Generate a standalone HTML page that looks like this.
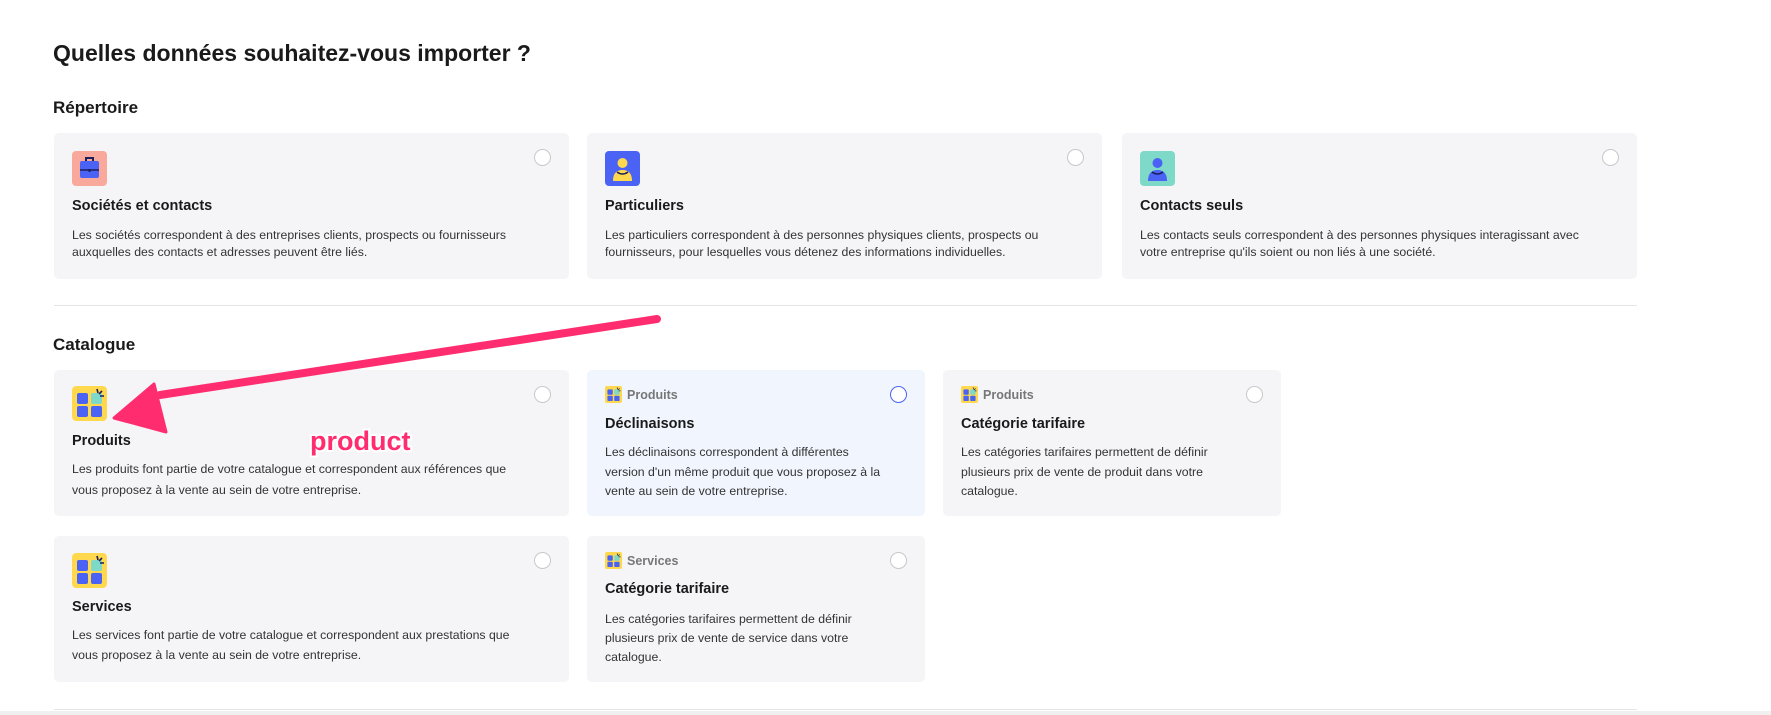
<!DOCTYPE html>
<html><head><meta charset="utf-8"><style>
*{margin:0;padding:0;box-sizing:border-box}
body{width:1771px;height:715px;background:#fff;font-family:"Liberation Sans",sans-serif;color:#1a1a1a;position:relative;overflow:hidden}
.a{position:absolute}
h1{position:absolute;left:53px;top:40px;font-size:23px;font-weight:bold;white-space:nowrap}
h2{position:absolute;font-size:17px;font-weight:bold;left:53px}
.card{position:absolute;background:#f5f5f8;border-radius:5px}
.card .ic{position:absolute;left:18px;top:18px;width:35px;height:35px;border-radius:4px}
.card .rd{position:absolute;top:16px;right:18px;width:17px;height:17px;border-radius:50%;border:1.5px solid #c8c8cc;background:#fff}
.card .t{position:absolute;left:18px;font-size:14.5px;font-weight:bold;white-space:nowrap}
.card .d{position:absolute;left:18px;font-size:12.3px;color:#333;white-space:nowrap}
.card .lb{position:absolute;left:18px;top:16px;font-size:12.5px;color:#777;font-weight:bold;display:flex;align-items:center;gap:5px}
.line{position:absolute;left:54px;width:1583px;height:1px;background:#e4e4e8}
</style></head><body>
<h1>Quelles données souhaitez-vous importer ?</h1>
<h2 style="top:98px">Répertoire</h2>

<div class="card" style="left:54px;top:133px;width:515px;height:146px">
 <svg class="ic" viewBox="0 0 35 35" style="background:#f9a99b"><rect x="8" y="10" width="19" height="17" rx="2" fill="#4a63f5"/><path d="M14 10V7h7v3" stroke="#1b1f5c" stroke-width="2" fill="none"/><path d="M8 19h19" stroke="#1b1f5c" stroke-width="1.5"/><rect x="16.5" y="18" width="2" height="3" fill="#1b1f5c"/></svg>
 <div class="rd"></div>
 <div class="t" style="top:65px">Sociétés et contacts</div>
 <div class="d" style="top:94px;line-height:17px">Les sociétés correspondent à des entreprises clients, prospects ou fournisseurs<br>auxquelles des contacts et adresses peuvent être liés.</div>
</div>
<div class="card" style="left:587px;top:133px;width:515px;height:146px">
 <svg class="ic" viewBox="0 0 35 35" style="background:#4a63f5"><circle cx="17.5" cy="12" r="5" fill="#ffd84d"/><path d="M8 30c0-8 4-11 9.5-11S27 22 27 30z" fill="#ffd84d"/><path d="M12 21q5.5 4 11 0" stroke="#1b1f5c" stroke-width="1.5" fill="none"/></svg>
 <div class="rd"></div>
 <div class="t" style="top:65px">Particuliers</div>
 <div class="d" style="top:94px;line-height:17px">Les particuliers correspondent à des personnes physiques clients, prospects ou<br>fournisseurs, pour lesquelles vous détenez des informations individuelles.</div>
</div>
<div class="card" style="left:1122px;top:133px;width:515px;height:146px">
 <svg class="ic" viewBox="0 0 35 35" style="background:#7fd9c8"><circle cx="17.5" cy="12" r="5" fill="#4a63f5"/><path d="M8 30c0-8 4-11 9.5-11S27 22 27 30z" fill="#4a63f5"/><path d="M12 21q5.5 4 11 0" stroke="#1b1f5c" stroke-width="1.5" fill="none"/></svg>
 <div class="rd"></div>
 <div class="t" style="top:65px">Contacts seuls</div>
 <div class="d" style="top:94px;line-height:17px">Les contacts seuls correspondent à des personnes physiques interagissant avec<br>votre entreprise qu'ils soient ou non liés à une société.</div>
</div>

<div class="line" style="top:305px"></div>
<h2 style="top:335px">Catalogue</h2>

<svg width="0" height="0" style="position:absolute"><defs><symbol id="grid" viewBox="0 0 35 35"><rect width="35" height="35" rx="4" fill="#ffd84d"/><rect x="5" y="7" width="11" height="11" rx="2" fill="#4a63f5"/><rect x="19" y="7" width="11" height="11" rx="2" fill="#7fd9c8"/><rect x="5" y="20" width="11" height="11" rx="2" fill="#4a63f5"/><rect x="19" y="20" width="11" height="11" rx="2" fill="#4a63f5"/><path d="M25 3l1 4M30 5l-3 3M32 10l-4 0" stroke="#1b1f5c" stroke-width="1.6"/></symbol></defs></svg>

<div class="card" style="left:54px;top:370px;width:515px;height:146px">
 <svg class="ic" style="top:16px"><use href="#grid"/></svg>
 <div class="rd"></div>
 <div class="t" style="top:63px">Produits</div>
 <div class="d" style="top:89px;line-height:21px">Les produits font partie de votre catalogue et correspondent aux références que<br>vous proposez à la vente au sein de votre entreprise.</div>
</div>
<div class="card" style="left:587px;top:370px;width:338px;height:146px;background:#f1f5fd">
 <div class="lb"><svg width="17" height="17"><use href="#grid"/></svg>Produits</div>
 <div class="rd" style="border-color:#4a63f5"></div>
 <div class="t" style="top:46px">Déclinaisons</div>
 <div class="d" style="top:73px;line-height:19.5px">Les déclinaisons correspondent à différentes<br>version d'un même produit que vous proposez à la<br>vente au sein de votre entreprise.</div>
</div>
<div class="card" style="left:943px;top:370px;width:338px;height:146px">
 <div class="lb"><svg width="17" height="17"><use href="#grid"/></svg>Produits</div>
 <div class="rd"></div>
 <div class="t" style="top:46px">Catégorie tarifaire</div>
 <div class="d" style="top:73px;line-height:19.5px">Les catégories tarifaires permettent de définir<br>plusieurs prix de vente de produit dans votre<br>catalogue.</div>
</div>

<div class="card" style="left:54px;top:536px;width:515px;height:146px">
 <svg class="ic" style="top:17px"><use href="#grid"/></svg>
 <div class="rd"></div>
 <div class="t" style="top:63px">Services</div>
 <div class="d" style="top:89px;line-height:20px">Les services font partie de votre catalogue et correspondent aux prestations que<br>vous proposez à la vente au sein de votre entreprise.</div>
</div>
<div class="card" style="left:587px;top:536px;width:338px;height:146px">
 <div class="lb"><svg width="17" height="17"><use href="#grid"/></svg>Services</div>
 <div class="rd"></div>
 <div class="t" style="top:45px">Catégorie tarifaire</div>
 <div class="d" style="top:74px;line-height:19px">Les catégories tarifaires permettent de définir<br>plusieurs prix de vente de service dans votre<br>catalogue.</div>
</div>

<div class="line" style="top:709px"></div>
<div class="a" style="left:0;top:711px;width:1771px;height:4px;background:#f0f0f0"></div>

<svg class="a" style="left:0;top:0" width="1771" height="715">
 <path d="M657 319 L160 395" stroke="#ff2d6f" stroke-width="8" stroke-linecap="round"/>
 <path d="M114 418 L154 384 L166 432 Z" fill="#ff2d6f" stroke="#ff2d6f" stroke-width="3" stroke-linejoin="round"/>
 <text x="310" y="450" font-family="Liberation Sans" font-weight="bold" font-size="27" fill="#ff2d6f" stroke="#fff" stroke-width="4" paint-order="stroke">product</text>
</svg>
</body></html>
